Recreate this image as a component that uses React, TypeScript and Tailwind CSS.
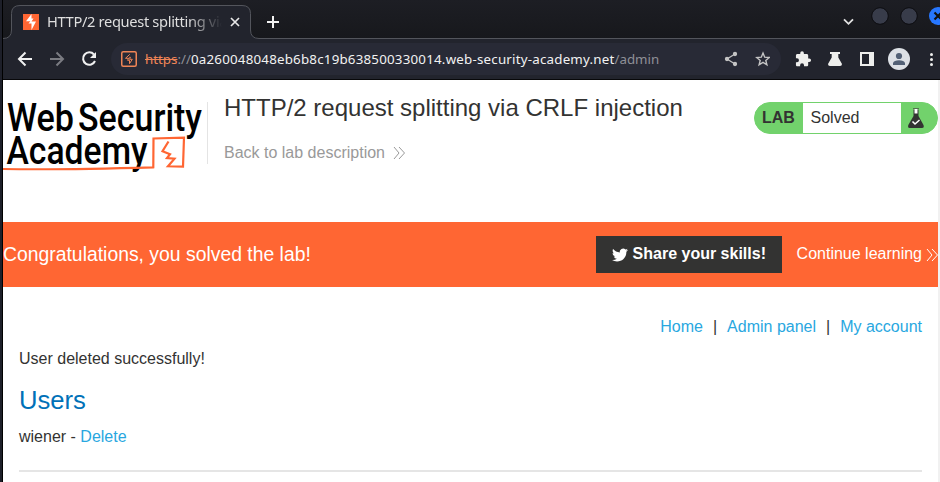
import React from "react";

const sans = "font-['Liberation_Sans',Arial,sans-serif]";
const noto = "font-['Noto_Sans',sans-serif]";

function Chevrons({ className }: { className: string }) {
  return (
    <svg width="13" height="14" viewBox="0 0 13 14" fill="none" stroke="currentColor" strokeWidth="1" className={className}>
      <path d="M1 1 L6 7 L1 13 M6 1 L11.5 7 L6 13" />
    </svg>
  );
}

function TabStrip() {
  return (
    <div className="relative flex h-[39px] w-full items-start bg-linear-to-b from-[#1d1e24] to-[#17181c]">
      <svg width="937" height="39" viewBox="3 0 937 39" className="absolute left-0 top-0">
        <path d="M3 39 V38.5 Q11.5 38.5 11.5 30 V13.5 Q11.5 5.5 20 5.5 H242 Q250.500 5.5 250.500 13.500 V30 Q250.500 38.500 259 38.500 H940 V39 Z" fill="#22242d" />
        <path d="M3 38.500 Q11.500 38.500 11.500 30 V13.500 Q11.500 5.500 20 5.500 H242 Q250.500 5.500 250.500 13.500 V30 Q250.500 38.500 259 38.500 H940" fill="none" stroke="#53555c" />
      </svg>
      <div className="relative flex h-[39px] w-full items-center pt-[5px]">
        <svg width="16" height="16" viewBox="0 0 16 16" className="ml-5 shrink-0">
          <rect width="16" height="16" fill="#ff6633" />
          <path d="M8.500 0 L3 7.300 H7.300 L5.500 9.500 H8.500 V16 L13 7.500 H8.500 L10.500 4.500 H8.500 Z" fill="#fff" />
        </svg>
        <div className={`${noto} -mt-[2px] ml-2 w-[175px] overflow-hidden whitespace-nowrap text-[14.670px] leading-5 tracking-[-0.340px] text-[#dfdfdf] [mask-image:linear-gradient(90deg,#000_80%,transparent_100%)]`}>
          HTTP/2 request splitting via
        </div>
        <svg width="10" height="10" viewBox="0 0 10 10" stroke="#e8e8e8" strokeWidth="1.700" className="ml-[8px] shrink-0">
          <path d="M1 1 L9 9 M9 1 L1 9" />
        </svg>
        <svg width="12" height="12" viewBox="0 0 12 12" stroke="#f2f2f2" strokeWidth="2" className="ml-[27px] shrink-0">
          <path d="M0 6 H12 M6 0 V12" />
        </svg>
        <svg width="11" height="8" viewBox="0 0 11 8" fill="none" stroke="#e2e2e2" strokeWidth="1.800" className="ml-auto mr-[17px] shrink-0">
          <path d="M1 1.300 L5.500 5.800 L10 1.300" />
        </svg>
        <svg width="69" height="20" viewBox="871 6 69 20" className="mb-[12px] shrink-0">
          <circle cx="880" cy="16" r="8.300" fill="#383c4a" stroke="#0c0c10" />
          <circle cx="909" cy="16" r="8.300" fill="#383c4a" stroke="#0c0c10" />
          <circle cx="938" cy="16" r="9" fill="#2777ff" />
          <path d="M934.500 12.500 L941.500 19.500 M934.500 19.500 L941.500 12.500" stroke="#111" strokeWidth="2.200" />
        </svg>
      </div>
    </div>
  );
}

function Toolbar() {
  return (
    <div className="flex h-[41px] items-center border-b border-[#08080a] bg-[#22242d]">
      <svg width="84" height="18" viewBox="15 50 84 18" fill="none" strokeWidth="2" className="ml-3 shrink-0">
        <path d="M32 59 H19.500 M25.500 52.500 L19 59 L25.500 65.500" stroke="#f0f0f0" />
        <path d="M50 59 H62.500 M56.500 52.500 L63 59 L56.500 65.500" stroke="#7b7c82" />
        <path d="M94 54.500 A6.200 6.200 0 1 0 95 61" stroke="#f0f0f0" />
        <path d="M96 52 V58 H90 Z" fill="#f0f0f0" />
      </svg>
      <div className={`${noto} ml-[12px] flex h-8 w-[670px] shrink-0 items-center rounded-full bg-[#282a36] pl-[10px] text-[13.330px] leading-5`}>
        <svg width="16" height="16" viewBox="0 0 16 16" className="shrink-0">
          <rect x=".75" y=".75" width="14.500" height="14.500" rx="1.500" fill="none" stroke="#f08556" strokeWidth="1.500" />
          <path d="M8.800 3.300 L4.500 7.300 H7.700 L6.500 9.300 H8.500 V12.700 L11.300 8.300 H8.500 L9.500 6.300 H8.200" fill="none" stroke="#f08556" strokeWidth="1" />
        </svg>
        <div className="ml-2 whitespace-nowrap text-[#f2f2f2]">
          <span className="text-[#f08556] line-through">https</span>
          <span className="text-[#8f9096]">://</span>
          <span className="tracking-[0.210px]">0a260048048eb6b8c19b638500330014.web-security-academy.net</span>
          <span className="text-[#8f9096]">/admin</span>
        </div>
        <svg width="46" height="16" viewBox="724 51 46 16" className="ml-auto mr-[11px] shrink-0">
          <g fill="#c4c4c4" stroke="#c4c4c4" strokeWidth="1.300">
            <path d="M735 54 L727 59 L735 64" fill="none" />
            <circle cx="735" cy="54" r="1.500" /><circle cx="727" cy="59" r="1.500" /><circle cx="735" cy="64" r="1.500" />
          </g>
          <path d="M763 53 L764.700 57.200 L769.200 57.500 L765.800 60.400 L766.900 64.800 L763 62.400 L759.100 64.800 L760.200 60.400 L756.800 57.500 L761.300 57.200 Z" fill="none" stroke="#c4c4c4" strokeWidth="1.400" />
        </svg>
      </div>
      <svg width="145" height="24" viewBox="795 47 145 24" className="ml-[14px] shrink-0">
        <path transform="translate(794.500 50.500) scale(.72)" fill="#eeeeec" d="M20.500 11H19V7c0-1.100-.9-2-2-2h-4V3.500a2.500 2.500 0 0 0-5 0V5H4c-1.100 0-2 .9-2 2v3.800h1.500a2.700 2.700 0 0 1 0 5.400H2V20c0 1.100.9 2 2 2h3.800v-1.500a2.700 2.700 0 0 1 5.400 0V22H17c1.100 0 2-.9 2-2v-4h1.500a2.500 2.500 0 0 0 0-5z" />
        <path d="M830 52 H840 V54 H838.300 V57.500 L842 64 Q842 66 840 66 H830 Q828 66 828 64 L831.700 57.500 V54 H830 Z" fill="#eeeeec" />
        <path fillRule="evenodd" d="M860 52 H874 V66 H860 Z M862 54 V64 H869 V54 Z" fill="#eeeeec" />
        <circle cx="899" cy="59" r="11" fill="#dde1e6" />
        <circle cx="899" cy="56" r="3.100" fill="#536176" />
        <path d="M893 65 V63 Q894 60.300 899 60.300 Q904 60.300 905 63 V65 Z" fill="#536176" />
        <g fill="#eeeeec"><circle cx="931.500" cy="54.500" r="1.500" /><circle cx="931.500" cy="59.500" r="1.500" /><circle cx="931.500" cy="64.500" r="1.500" /></g>
      </svg>
    </div>
  );
}

function AcademyLogo() {
  return (
    <svg width="205" height="78" viewBox="3 98 205 78" className="shrink-0 font-['Roboto',sans-serif] font-medium">
      <text x="7" y="130.500" fontSize="38" textLength="67" lengthAdjust="spacingAndGlyphs">Web</text>
      <text x="78" y="130.500" fontSize="38" textLength="124" lengthAdjust="spacingAndGlyphs">Security</text>
      <text x="6.500" y="163.500" fontSize="38" textLength="141" lengthAdjust="spacingAndGlyphs">Academy</text>
      <g fill="none" stroke="#ff6633">
        <path d="M3 169 Q60 170 153.300 167.300 L153.500 138.500 L184 137.700 L183 166.700 L168 166.300 L174.500 158.700 L167 158 L170 154.300 L162.500 151.300 L168.500 141.500" strokeWidth="2.200" />
      </g>
      <path d="M207.500 102 V164" stroke="#e4e4e4" />
    </svg>
  );
}

function LabStatus() {
  return (
    <div className="flex h-8 w-[184px] items-center overflow-hidden rounded-full border border-[#72d26c] bg-[#72d26c] text-[#333332]">
      <span className="w-12 pl-[7px] text-base font-bold leading-[32px]">LAB</span>
      <span className="h-[30px] w-[98px] bg-white pl-[7.500px] text-base leading-[30px]">Solved</span>
      <svg width="18" height="22" viewBox="0 0 18 22" className="ml-[6px]">
        <path d="M6.500 2.500 V9 L1.300 18 Q.5 21 2.500 21 H15 Q17.500 21 16.500 18 L11.500 9 V2.500" fill="#333332" />
        <path d="M7.500 2 V6.500 H10.500 V2 Z" fill="#fff" />
        <path d="M6 1.500 H12" stroke="#55734f" />
        <path d="M5.500 14.500 L8 17 L12.500 13" fill="none" stroke="#fff" strokeWidth="1.500" />
      </svg>
    </div>
  );
}

export default function App() {
  return (
    <div className={`${sans} flex h-[482px] w-[940px] overflow-hidden text-base text-[#333332]`}>
      <div className="w-[3px] shrink-0 border-r border-black bg-[#1d1f29]" />
      <div className="flex w-[937px] shrink-0 flex-col">
        <TabStrip />
        <Toolbar />
        <div className="flex h-[402px] flex-col border-r-2 border-[#f1f1f1] bg-white">
          <header className="flex h-[142px] items-start">
            <div className="pt-[18px]"><AcademyLogo /></div>
            <div className="ml-4 pt-[12px]">
              <h1 className="whitespace-nowrap text-2xl leading-8">HTTP/2 request splitting via CRLF injection</h1>
              <a className="mt-[17px] flex items-center text-base leading-6 text-[#999999]">
                Back to lab description
                <Chevrons className="ml-[8px]" />
              </a>
            </div>
            <div className="ml-auto pt-[22px]"><LabStatus /></div>
          </header>
          <section className="flex h-[65px] shrink-0 items-center overflow-hidden bg-[#ff6633] text-white">
            <p className="whitespace-nowrap pb-px text-[19.360px] leading-6">Congratulations, you solved the lab!</p>
            <button className="ml-auto flex h-[37px] w-[186px] shrink-0 items-center bg-[#333332] pl-4 font-bold">
              <svg width="16" height="16" viewBox="0 0 24 24" fill="white">
                <path d="M23.950 4.570a10 10 0 0 1-2.820.77 4.960 4.960 0 0 0 2.160-2.720c-.95.550-2 .95-3.130 1.180a4.920 4.920 0 0 0-8.380 4.480C7.690 8.100 4.070 6.130 1.640 3.160a4.820 4.820 0 0 0-.67 2.480c0 1.710.87 3.210 2.190 4.100a4.900 4.900 0 0 1-2.230-.620v.060a4.920 4.920 0 0 0 3.950 4.830 5 5 0 0 1-2.210.08 4.940 4.940 0 0 0 4.600 3.420A9.870 9.870 0 0 1 0 19.540a13.990 13.990 0 0 0 7.550 2.210c9.050 0 14-7.500 14-13.990 0-.21 0-.42-.02-.63a9.940 9.940 0 0 0 2.420-2.560z" />
              </svg>
              <span className="ml-[5px] whitespace-nowrap pb-[2px]">Share your skills!</span>
            </button>
            <a className="-mr-px ml-[15px] flex shrink-0 items-center whitespace-nowrap pb-[2px] leading-6">
              Continue learning
              <Chevrons className="ml-1 mt-[3px]" />
            </a>
          </section>
          <main className="flex flex-col px-4 pt-[28px]">
            <nav className="flex justify-end whitespace-pre leading-6 text-[#29a7df]">
              <a>Home</a>
              <span className="mx-[10px] text-[#333332]">|</span>
              <a>Admin panel</a>
              <span className="mx-[10px] text-[#333332]">|</span>
              <a>My account</a>
            </nav>
            <p className="mt-2 leading-6">User deleted successfully!</p>
            <h2 className="mt-[13px] text-[25.600px] leading-8 text-[#0071b8]">Users</h2>
            <p className="mt-[9px] leading-6">wiener - <a className="text-[#29a7df]">Delete</a></p>
            <hr className="mt-[21px] border-t-2 border-[#e5e5e5]" />
          </main>
        </div>
      </div>
    </div>
  );
}
